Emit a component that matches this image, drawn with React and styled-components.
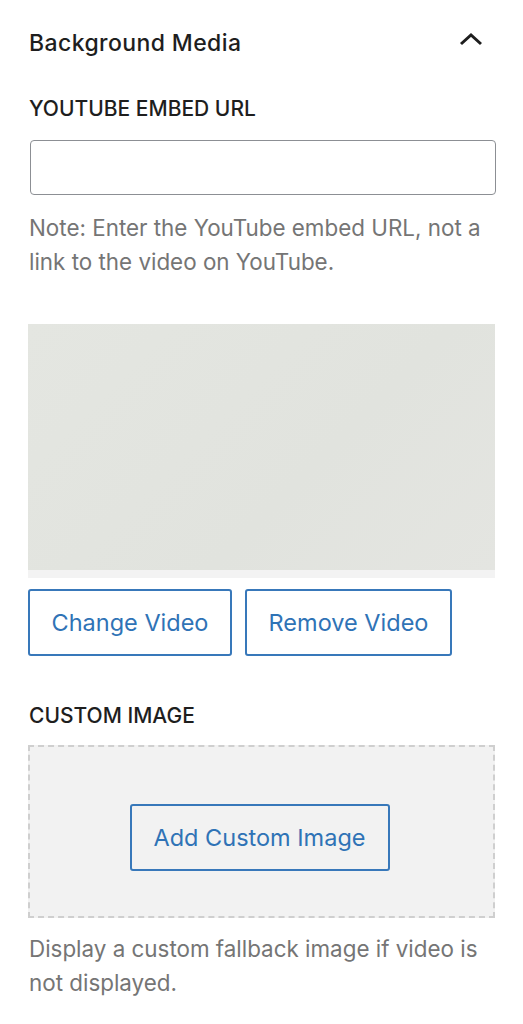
import React from "react";
import styled, { createGlobalStyle } from "styled-components";

const GlobalStyle = createGlobalStyle`
  body {
    margin: 0;
    background: #fff;
    font-family: Inter, "Noto Sans", sans-serif;
    color: #1e1e1e;
  }
`;

const Panel = styled.div`
  width: 523px;
  padding: 23px 28px 30px 28px;
  box-sizing: border-box;
`;

const PanelHeader = styled.div`
  display: flex;
  justify-content: space-between;
  align-items: center;
  height: 40px;
  margin-bottom: 35px;
`;

const PanelTitle = styled.h2`
  margin: 0;
  padding-left: 1px;
  font-size: 23px;
  line-height: 40px;
  font-weight: 500;
  letter-spacing: 0.4px;
`;

const Toggle = styled.button`
  border: 0;
  background: none;
  padding: 0;
  margin: 0 11px 8px 0;
  width: 26px;
  height: 26px;
  display: flex;
  align-items: center;
  justify-content: center;
  color: #1e1e1e;
`;

const Label = styled.div`
  font-size: 21px;
  line-height: 22px;
  font-weight: 500;
  text-transform: uppercase;
  padding-left: 1px;
  margin-bottom: ${p => p.gap || 20}px;
`;

const TextInput = styled.input`
  display: block;
  width: 466px;
  height: 55px;
  margin-left: 2px;
  box-sizing: border-box;
  border: 1.5px solid #8c8f94;
  border-radius: 4px;
  background: #fff;
`;

const Help = styled.p`
  margin: ${p => p.top || 16}px 0 0 1px;
  font-size: 22.4px;
  line-height: 34px;
  color: #757575;
`;

const Preview = styled.div`
  margin-top: 45px;
  height: 254px;
  display: flex;
  flex-direction: column;
`;

const Frame = styled.div`
  flex: 1;
  background: linear-gradient(135deg, #e4e6e1 0%, #e1e3de 60%, #e4e5e1 100%);
`;

const FrameBar = styled.div`
  height: 8px;
  background: #f3f3f3;
`;

const ButtonRow = styled.div`
  display: flex;
  gap: 13px;
  margin-top: 11px;
  margin-bottom: 49px;
`;

const OutlineButton = styled.button`
  height: 67px;
  width: ${p => p.w}px;
  box-sizing: border-box;
  border: 2px solid #3878ba;
  border-radius: 3px;
  background: #fff;
  color: #2f73b6;
  font-family: inherit;
  font-size: 23.5px;
  font-weight: 400;
  padding: 0;
`;

const DropZone = styled.div`
  height: 173px;
  box-sizing: border-box;
  border: 2px dashed #cfcfcf;
  background: #f2f2f2;
  display: flex;
  align-items: center;
  justify-content: center;
  padding: 12px 4px 0 0;
`;

const ZoneButton = styled(OutlineButton)`
  background: #f2f2f2;
`;

export default function App() {
  return (
    <>
      <GlobalStyle />
      <Panel>
        <PanelHeader>
          <PanelTitle>Background Media</PanelTitle>
          <Toggle aria-label="Collapse">
            <svg width="24" height="14" viewBox="0 0 24 14" fill="none">
              <path
                d="M2 12 L12 3 L22 12"
                stroke="currentColor"
                strokeWidth="3"
              />
            </svg>
          </Toggle>
        </PanelHeader>

        <Label>YouTube Embed URL</Label>
        <TextInput type="text" />
        <Help>
          Note: Enter the YouTube embed URL, not a link to the video on
          YouTube.
        </Help>

        <Preview>
          <Frame />
          <FrameBar />
        </Preview>

        <ButtonRow>
          <OutlineButton w={204}>Change Video</OutlineButton>
          <OutlineButton w={207}>Remove Video</OutlineButton>
        </ButtonRow>

        <Label gap={18}>Custom Image</Label>
        <DropZone>
          <ZoneButton w={260}>Add Custom Image</ZoneButton>
        </DropZone>
        <Help top={14}>
          Display a custom fallback image if video is not displayed.
        </Help>
      </Panel>
    </>
  );
}
